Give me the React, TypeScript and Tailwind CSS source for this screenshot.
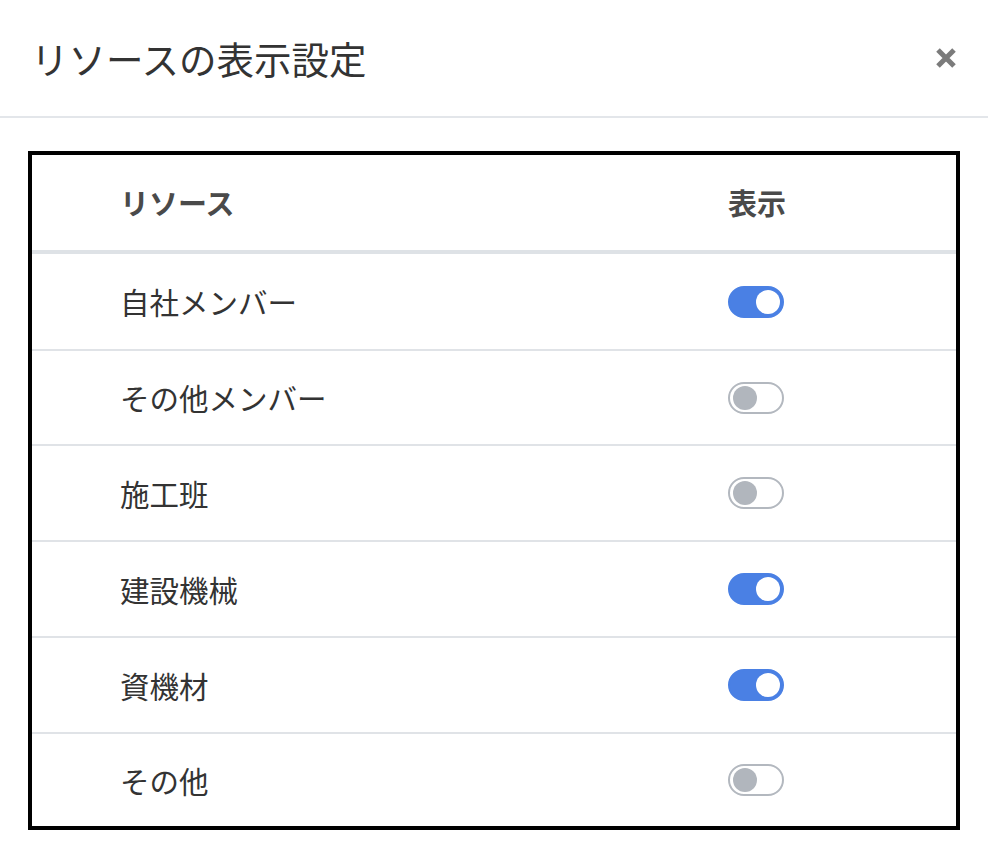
import React, { useState } from "react";

const font = { fontFamily: '"Noto Sans CJK JP", "Noto Sans", sans-serif' };

const initial = [
  { name: "自社メンバー", on: true, h: "h-[95px]" },
  { name: "その他メンバー", on: false, h: "h-[95px]" },
  { name: "施工班", on: false, h: "h-[96px]" },
  { name: "建設機械", on: true, h: "h-[96px]" },
  { name: "資機材", on: true, h: "h-[96px]" },
  { name: "その他", on: false, h: "h-[94px]" },
];

function Toggle({ on, onClick }: { on: boolean; onClick: () => void }) {
  return (
    <button
      onClick={onClick}
      className={
        on
          ? "relative h-[32px] w-[56px] rounded-full bg-[#4a80e4] border-[2px] border-[#4a80e4]"
          : "relative h-[32px] w-[56px] rounded-full bg-white border-[2px] border-[#b3b8bf]"
      }
    >
      <span
        className={
          on
            ? "absolute top-[2px] left-[26px] h-[24px] w-[24px] rounded-full bg-white"
            : "absolute top-[2px] left-[3px] h-[24px] w-[24px] rounded-full bg-[#b1b6bd]"
        }
      />
    </button>
  );
}

export default function App() {
  const [rows, setRows] = useState(initial);

  return (
    <div className="h-[858px] w-[988px] bg-white" style={font}>
      <div className="flex h-[118px] items-center justify-between border-b-[2px] border-[#e3e6ea] pl-[31px] pr-[30px]">
        <h1 className="text-[37.5px] font-normal leading-none text-[#333]">リソースの表示設定</h1>
        <button className="flex h-[24px] w-[24px] items-center justify-center">
          <svg width="22" height="22" viewBox="0 0 22 22">
            <path d="M3 3 L19 19 M19 3 L3 19" stroke="#7b7b7b" strokeWidth="5" strokeLinecap="butt" />
          </svg>
        </button>
      </div>

      <div className="px-[28px] pt-[33px]">
        <div className="border-[4px] border-black">
          <div className="grid h-[99px] grid-cols-[664px_1fr] items-center border-b-[4px] border-[#dee2e6] text-[29px] font-bold text-[#4a4a4a]">
            <div className="pl-[88px]">リソース</div>
            <div className="pl-[32px]">表示</div>
          </div>
          {rows.map((r, i) => (
            <div
              key={r.name}
              className={
                (i === 0
                  ? "grid grid-cols-[664px_1fr] items-center text-[29.5px] text-[#333] "
                  : "grid grid-cols-[664px_1fr] items-center border-t-[2px] border-[#e0e3e7] text-[29.5px] text-[#333] ") + r.h
              }
            >
              <div className="pl-[88px]">{r.name}</div>
              <div className="flex pl-[32px]">
                <Toggle
                  on={r.on}
                  onClick={() =>
                    setRows(rows.map((x, j) => (j === i ? { ...x, on: !x.on } : x)))
                  }
                />
              </div>
            </div>
          ))}
        </div>
      </div>
    </div>
  );
}
